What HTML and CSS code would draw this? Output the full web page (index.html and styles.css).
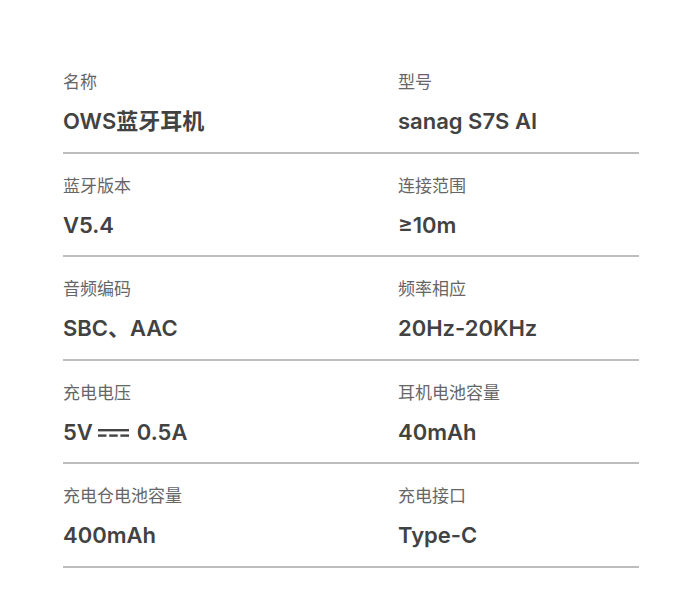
FILE: index.html
```html
<!DOCTYPE html>
<html lang="zh">
<head>
<meta charset="utf-8">
<link rel="stylesheet" href="styles.css">
</head>
<body>
<div class="specs">
  <div class="row">
    <div class="cell"><div class="label">名称</div><div class="value">OWS蓝牙耳机</div></div>
    <div class="cell"><div class="label">型号</div><div class="value">sanag S7S AI</div></div>
  </div>
  <div class="row">
    <div class="cell"><div class="label">蓝牙版本</div><div class="value">V5.4</div></div>
    <div class="cell"><div class="label">连接范围</div><div class="value">≥10m</div></div>
  </div>
  <div class="row">
    <div class="cell"><div class="label">音频编码</div><div class="value">SBC、AAC</div></div>
    <div class="cell"><div class="label">频率相应</div><div class="value">20Hz-20KHz</div></div>
  </div>
  <div class="row">
    <div class="cell"><div class="label">充电电压</div><div class="value">5V<svg class="dc" viewBox="0 0 31 10" width="31" height="10"><rect x="0" y="1" width="31" height="2.4" fill="#444"/><rect x="0" y="6.4" width="8.5" height="2.4" fill="#444"/><rect x="11.2" y="6.4" width="8.5" height="2.4" fill="#444"/><rect x="22.4" y="6.4" width="8.6" height="2.4" fill="#444"/></svg>0.5A</div></div>
    <div class="cell"><div class="label">耳机电池容量</div><div class="value">40mAh</div></div>
  </div>
  <div class="row">
    <div class="cell"><div class="label">充电仓电池容量</div><div class="value">400mAh</div></div>
    <div class="cell"><div class="label">充电接口</div><div class="value">Type-C</div></div>
  </div>
</div>
</body>
</html>
```
FILE: styles.css
```css
html, body {
  margin: 0;
  padding: 0;
  background: #fff;
}
body {
  font-family: Inter, "Noto Sans CJK SC", sans-serif;
}
.specs {
  width: 576px;
  margin-left: 63px;
  padding-top: 50px;
}
.row {
  display: grid;
  grid-template-columns: 335px 1fr;
  padding: 20px 0 15.5px;
  border-bottom: 2px solid #bdbdbd;
}
.cell {
  display: flex;
  flex-direction: column;
  gap: 14px;
}
.label {
  font-family: "Noto Sans CJK SC", sans-serif;
  font-size: 17px;
  line-height: 22px;
  color: #666;
}
.value {
  font-size: 22px;
  line-height: 30px;
  font-weight: 600;
  color: #424242;
  display: flex;
  align-items: center;
}
.dc {
  margin: 0 8px 0 5px;
  position: relative;
  top: 1px;
}
```
